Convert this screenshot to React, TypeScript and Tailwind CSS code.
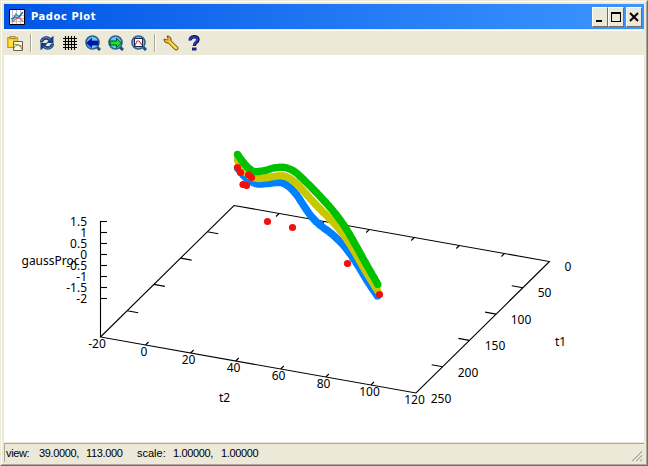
import type { ReactNode } from "react";

type Label = [string, number, number];

const zLabels: Label[] = [
  ["1.5", 87, 226], ["1", 87, 237], ["0.5", 87, 248], ["0", 87, 259],
  ["-0.5", 87, 270], ["-1", 87, 281], ["-1.5", 87, 292], ["-2", 87, 303],
];
const t2Labels: Label[] = [
  ["-20", 97, 348], ["0", 144, 356], ["20", 188.5, 364], ["40", 233.5, 372],
  ["60", 278.5, 380], ["80", 323.5, 388], ["100", 369.5, 396], ["120", 414.5, 404],
];
const t1Labels: Label[] = [
  ["0", 568, 271], ["50", 544.5, 297], ["100", 521, 324],
  ["150", 495, 350], ["200", 468, 377], ["250", 441, 403],
];

const green: number[][] = [[237.5,154.5],[243,162],[249,168.5],[255,171.5],[265,170.5],[275,167.8],[285,167.5],[295,172],[305,181],[313,189],[323,199.5],[334,212],[345,227],[355,244],[365,262],[378.5,285.5]];
const yellow: number[][] = [[237.5,160],[243,169],[250,176],[258,178.5],[268,177.5],[280,175.7],[288,177.5],[298,185],[307,195],[320,209],[333,222],[343,234],[353,249],[365,270],[378.5,292]];
const blue: number[][] = [[237.5,168],[245,177],[252,182],[258,184],[268,183.5],[280,182.5],[288,186],[296,194],[304,206],[311,216],[320,225],[333,235],[345,247],[357,264],[368,282],[378.5,297.500]];
const red: number[][] = [[237.5,167.5],[240.5,172.5],[248.5,175],[251.5,177.5],[243,184.5],[246.5,185.5],[267.5,221.5],[292.5,227.5],[347.5,263.5],[379.5,294.5]];

function smooth(p: number[][]) {
  let d = `M${p[0][0]} ${p[0][1]}`;
  for (let i = 0; i < p.length - 1; i++) {
    const a = p[Math.max(i - 1, 0)], b = p[i], c = p[i + 1], e = p[Math.min(i + 2, p.length - 1)];
    d += `C${b[0] + (c[0] - a[0]) / 6} ${b[1] + (c[1] - a[1]) / 6} ${c[0] - (e[0] - b[0]) / 6} ${c[1] - (e[1] - b[1]) / 6} ${c[0]} ${c[1]}`;
  }
  return d;
}

function Icon({ children }: { children: ReactNode }) {
  return <svg width="16" height="16" viewBox="0 0 16 16" className="block shrink-0">{children}</svg>;
}

function Lens({ children }: { children: ReactNode }) {
  return (
    <Icon>
      <path d="M12 12l3 3" stroke="#244a78" strokeWidth="3" />
      <circle cx="7.5" cy="7.5" r="6.5" fill="#68c4f4" stroke="#286494" strokeWidth="1.6" />
      {children}
    </Icon>
  );
}

function Separator() {
  return <div className="h-[18px] w-[2px] border-r border-l border-r-white border-l-[#aca899]" />;
}

function Caption({ children, className = "" }: { children: ReactNode; className?: string }) {
  return (
    <div className={"h-5 w-4 shrink-0 border border-t-white border-r-[#716f64] border-b-[#716f64] border-l-white bg-[#ece9d8] " + className}>
      <svg width="14" height="18" viewBox="0 0 14 18" className="block">{children}</svg>
    </div>
  );
}

function Plot() {
  return (
    <svg width="640" height="387" viewBox="4 55 640 387" className="block shrink-0 bg-white font-['Noto_Sans',sans-serif] text-[12px]">
      <g stroke="#000" strokeWidth="1.1" fill="none">
        <path d="M100.5 221V337M234 205.5L549.5 261.5L416 393L100.5 337Z" />
        {zLabels.map((_, i) => <path key={i} d={`M100 ${221.5 + i * 11}h7`} />)}
        {[1, 2, 3, 4, 5, 6].map((i) => (
          <path key={i} d={`M${100.5 + i * 45.07} ${337 + i * 8}l3 -3M${234 + i * 45.07} ${205.5 + i * 8}l-3 3`} />
        ))}
        {[1, 2, 3, 4].map((i) => (
          <path key={i} d={`M${100.5 + i * 26.7} ${337 - i * 26.3}l11 2M${549.5 - i * 26.7} ${261.5 + i * 26.3}l-11 -2`} />
        ))}
      </g>
      <g fill="#000">
        {zLabels.map(([s, x, y]) => <text key={s} x={x} y={y} textAnchor="end">{s}</text>)}
        {[...t2Labels, ...t1Labels].map(([s, x, y]) => <text key={s + x} x={x} y={y} textAnchor="middle">{s}</text>)}
        <text x="21.5" y="265">gaussProc</text>
        <text x="219" y="402">t2</text>
        <text x="555" y="346">t1</text>
      </g>
      <g fill="none" strokeWidth="7.4" strokeLinecap="round" strokeDasharray="0 2.2">
        <path d={smooth(blue)} stroke="#0080ff" />
        <path d={smooth(yellow)} stroke="#c8c800" />
        <path d={smooth(green)} stroke="#00c000" />
      </g>
      {red.map(([x, y]) => <circle key={x} cx={x} cy={y} r="3.6" fill="#f01010" />)}
    </svg>
  );
}

export default function App() {
  return (
    <div className="flex h-[466px] w-[648px] flex-col overflow-hidden border border-t-[#ece9d8] border-r-[#716f64] border-b-[#716f64] border-l-[#ece9d8] bg-[#ece9d8]">
      <div className="flex min-h-0 flex-1 flex-col border border-t-white border-r-[#aca899] border-b-[#aca899] border-l-white p-[2px]">
        <div className="flex h-[25px] shrink-0 items-center bg-linear-to-r from-[#0055e5] to-[#3d95ff] pr-[2px] pl-[5px]">
          <Icon>
            <path d="M.5 .5h15v15H.5z" fill="#fff" stroke="#000" />
            <path d="M3.5 1v14M1 12.5h14M3 9.5h12M3 6.5h12M7.5 1v14M11.5 1v14" stroke="#a8a8b8" strokeWidth=".7" />
            <path d="M3 12l4-7 3 3 4-5" stroke="#18a080" strokeWidth="1.2" fill="none" />
            <path d="M2 10l4-2 3 1 5-6" stroke="#3060d0" strokeWidth="1.2" fill="none" />
            <path d="M3 13l4-3 3-1 4 3" stroke="#e06070" strokeWidth="1.2" fill="none" />
          </Icon>
          <span className="ml-[6px] font-['DejaVu_Sans_Condensed','DejaVu_Sans',sans-serif] text-[11px] leading-none font-bold tracking-[0.6px] whitespace-nowrap text-white">Padoc Plot</span>
          <div className="ml-auto flex">
            <Caption><path d="M3 13h6" stroke="#000" strokeWidth="2" /></Caption>
            <Caption><path d="M2 4.5h10M2.5 4v10M11.5 4v10M2 13.5h10M2 5.5h10" stroke="#000" /></Caption>
            <Caption className="ml-[2px]"><path d="M3 5l8 8M11 5l-8 8" stroke="#000" strokeWidth="2" /></Caption>
          </div>
        </div>
        <div className="mt-px h-px shrink-0 bg-white" />
        <div className="flex h-[24px] shrink-0 items-center bg-[#ece9d8] pl-[3px]">
          <Icon>
            <path d="M.7 2.5h10v10H.7z" fill="#f8c418" stroke="#b88410" strokeWidth=".8" />
            <path d="M3 3.5V1.5h5v2z" fill="#e8d890" stroke="#806820" strokeWidth=".7" />
            <path d="M2 4.500h4v7H2z" fill="#ffe448" />
            <path d="M6.5 6.5h9v9h-9z" fill="#f4ffec" stroke="#706048" />
            <path d="M7 13c3-5 5-4 8 1" stroke="#e04020" fill="none" />
            <path d="M7 9l8 2" stroke="#40b040" />
          </Icon>
          <div className="ml-[7px]"><Separator /></div>
          <div className="ml-[7px] flex gap-[7px]">
            <Icon>
              <path d="M1 7.500C1 1.500 8 -.5 11.700 3L14.500 .8V8H7.300L9.500 5.700C7 4 4.500 5 4 7.500z" fill="#183c78" />
              <path d="M15 8.500C15 14.500 8 16.500 4.300 13L1.500 15.200V8H8.700L6.500 10.300C9 12 11.500 11 12 8.500z" fill="#183c78" />
              <path d="M2.500 6C4 2 8.500 1.500 11.500 5M4.500 11.500C8 14.500 12 13.500 13.500 10" stroke="#5898d8" fill="none" />
            </Icon>
            <Icon><path d="M3.5 1v14M6.5 1v14M9.5 1v14M12.5 1v14M1 3.5h14M1 6.5h14M1 9.5h14M1 12.5h14" stroke="#000" strokeWidth="1.1" /></Icon>
            <Lens><path d="M1.5 8L6.5 3.5v2.500H13v4H6.500v2.500z" fill="#0010c8" stroke="#001050" strokeWidth=".7" /></Lens>
            <Lens><path d="M13.5 8L8.5 3.5v2.500H2v4h6.500v2.500z" fill="#10e820" stroke="#004010" strokeWidth=".9" /></Lens>
            <Lens><path d="M3.5 3.5h8v8h-8z" fill="#fff" stroke="#182850" /><path d="M4 10.5l2-4.500h2l3 4" stroke="#e03030" strokeWidth="1.1" fill="none" /></Lens>
          </div>
          <div className="ml-[7px]"><Separator /></div>
          <div className="ml-[7px] flex gap-[7px]">
            <Icon>
              <path d="M4 1L5 3.5L3.5 5L1 4C.8 7 3 8.3 5.2 7.900L12.300 15C14 15.8 15.8 14 14.9 12.300L8 5.800C8.500 3 7 .8 4 1z" fill="#f8b820" stroke="#604010" strokeWidth=".9" />
              <path d="M6.5 6.5l7 7" stroke="#ffe870" strokeWidth="1.200" />
            </Icon>
            <Icon>
              <path d="M4.3 5.5C3.5 1 12 .5 12 4.500C12 7.500 8.300 7 8.300 11" fill="none" stroke="#101060" strokeWidth="3.4" />
              <path d="M4 5C4 1.500 11.500 1 11.500 4.500C11.500 7 8 7 8 10.500" fill="none" stroke="#3038c0" strokeWidth="1.8" />
              <path d="M6 12.5h4.500v3H6z" fill="#202080" />
            </Icon>
          </div>
        </div>
        <Plot />
        <div className="flex min-h-0 flex-1 items-stretch pt-px">
          <div className="flex flex-1 items-center border-t border-l border-t-[#aca899] border-l-[#aca899] pl-px font-['Liberation_Sans',Arial,sans-serif] text-[11px] leading-none tracking-[-0.35px] whitespace-nowrap text-black">
            <span className="w-[33px]">view:</span>
            <span className="w-[47px]">39.0000,</span>
            <span className="w-[51px]">113.000</span>
            <span className="w-[36px] tracking-normal">scale:</span>
            <span className="w-[48px]">1.00000,</span>
            <span>1.00000</span>
            <svg width="13" height="13" viewBox="0 0 13 13" className="mt-auto mr-px ml-auto block">
              <path d="M2 12L12 2M6 12l6-6M10 12l2-2" stroke="#aca899" strokeWidth="1.5" />
              <path d="M1 12L12 1M5 12l7-7M9 12l3-3" stroke="#fff" strokeWidth=".6" />
            </svg>
          </div>
        </div>
      </div>
    </div>
  );
}
